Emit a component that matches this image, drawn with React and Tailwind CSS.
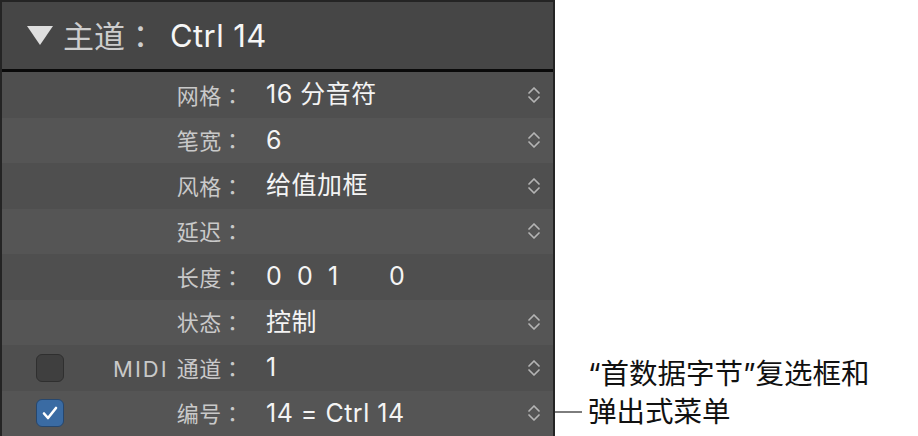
import React from "react";

const FONT = "font-['Inter','Noto_Sans_CJK_SC',sans-serif]";

function Chevron() {
  return (
    <svg width="14" height="18" viewBox="0 0 14 18" fill="none" stroke="#b4b4b4" strokeWidth="1.7" strokeLinecap="round" strokeLinejoin="round">
      <path d="M2 7 L7 2 L12 7" />
      <path d="M2 11 L7 16 L12 11" />
    </svg>
  );
}

function Colon() {
  return <span className="font-['Noto_Sans_CJK_JP',sans-serif]">：</span>;
}

function Checkbox({ checked }) {
  if (checked) {
    return (
      <div className="w-[28px] h-[28px] rounded-[6px] bg-[#3a6ba3] border border-[#26476e] flex items-center justify-center">
        <svg width="18" height="16" viewBox="0 0 18 16" fill="none" stroke="#ffffff" strokeWidth="2.6" strokeLinecap="round" strokeLinejoin="round">
          <path d="M3 8.5 L7 13 L15 3" />
        </svg>
      </div>
    );
  }
  return <div className="w-[28px] h-[28px] rounded-[6px] bg-[#3f3f3f] border border-[#2f2f2f]" />;
}

const rows = [
  { label: "网格", value: "16 分音符", chev: true },
  { label: "笔宽", value: "6", chev: true },
  { label: "风格", value: "给值加框", chev: true },
  { label: "延迟", value: "", chev: true },
  { label: "长度", value: "__len", chev: false },
  { label: "状态", value: "控制", chev: true },
  { label: "通道", prefix: "MIDI ", value: "1", chev: true, cb: "off" },
  { label: "编号", value: "14 = Ctrl 14", chev: true, cb: "on" },
];

function Row({ r, i }) {
  const bg = i % 2 === 0 ? "bg-[#4f4f4f]" : "bg-[#555555]";
  return (
    <div className={`h-[45.5px] flex items-center ${bg}`}>
      <div className="w-[242px] flex items-center">
        <div className="ml-[34px] w-[28px]">
          {r.cb ? <Checkbox checked={r.cb === "on"} /> : null}
        </div>
        <div className="flex-1 text-right text-[22px] tracking-[0.4px] text-[#c9c9c9] leading-none">
          {r.prefix ? <span className="tracking-[2px]">{r.prefix}</span> : null}
          {r.label}
          <Colon />
        </div>
      </div>
      <div className="ml-[22px] flex-1 text-[25px] tracking-[0.5px] text-[#f4f4f4] leading-none flex items-center">
        {r.value === "__len" ? (
          <>
            <span className="w-[31px]">0</span>
            <span className="w-[31px]">0</span>
            <span className="w-[31px]">1</span>
            <span className="ml-[30px]">0</span>
          </>
        ) : (
          r.value
        )}
      </div>
      <div className="w-[14px] mr-[12px] flex items-center">{r.chev ? <Chevron /> : null}</div>
    </div>
  );
}

export default function App() {
  return (
    <div className={`w-[918px] h-[436px] bg-white flex overflow-hidden ${FONT}`}>
      <div className="w-[555px] h-[436px] flex flex-col border-l-2 border-t-2 border-r-2 border-[#242424]">
        <div className="h-[67px] bg-[#464646] flex items-center">
          <svg className="ml-[25px]" width="26" height="19" viewBox="0 0 26 19">
            <path d="M0 0 H26 L13 19 Z" fill="#dedede" />
          </svg>
          <span className="ml-[10px] text-[31px] text-[#cdcdcd] leading-none">
            主道<Colon />
          </span>
          <span className="ml-[14px] text-[31px] tracking-[0.4px] text-[#f6f6f6] leading-none">Ctrl 14</span>
        </div>
        <div className="h-[3px] bg-[#0a0a0a]" />
        {rows.map((r, i) => (
          <Row key={i} r={r} i={i} />
        ))}
      </div>
      <div className="flex-1 flex flex-col justify-end pb-[5px] text-[28.5px] text-[#111111] leading-[38px]">
        <div className="pl-[33px]">“首数据字节”复选框和</div>
        <div className="flex items-center">
          <div className="w-[27px] h-[2px] bg-[#7d7d7d]" />
          <div className="ml-[6px]">弹出式菜单</div>
        </div>
      </div>
    </div>
  );
}
